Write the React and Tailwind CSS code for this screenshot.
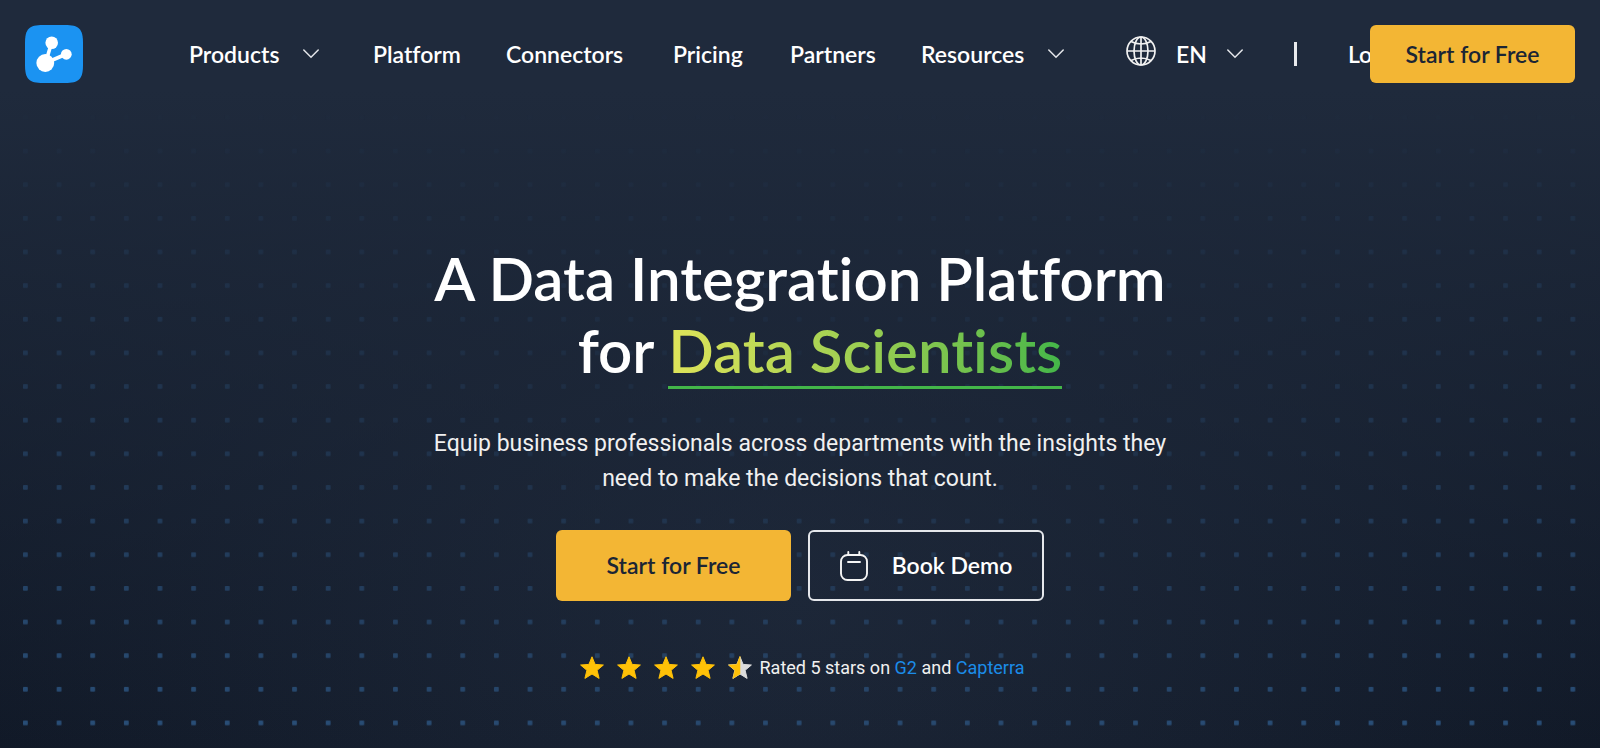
/**
 * Landing page hero — top navigation, headline, call-to-action buttons and rating.
 */

const NAV_ITEMS = [
    { label: 'Products', hasMenu: true, width: 'w-[184px]' },
    { label: 'Platform', width: 'w-[133px]' },
    { label: 'Connectors', width: 'w-[167px]' },
    { label: 'Pricing', width: 'w-[117px]' },
    { label: 'Partners', width: 'w-[131px]' },
    { label: 'Resources', hasMenu: true, width: 'w-[205px]' },
];

const STAR_PATH = 'M12 0.8l3.1 7.6 8.3.6-6.3 5.3 2 8.1L12 18l-7.1 4.4 2-8.1L.6 9l8.3-.6z';

function Logo() {
    return (
        <svg viewBox="0 0 58 58" className="size-[58px]" aria-hidden="true">
            <path
                d="M18 0H40C54 0 58 4 58 18V40C58 54 54 58 40 58H18C4 58 0 54 0 40V18C0 4 4 0 18 0z"
                fill="#1b93f2"
            />
            <path d="M20.500 38L26.500 18M20.500 38L41.500 29" stroke="#fff" strokeWidth="3.600" />
            <circle cx="20.300" cy="38" r="8.900" fill="#fff" />
            <circle cx="26.700" cy="17.800" r="6.300" fill="#fff" />
            <circle cx="41.300" cy="29.300" r="5.400" fill="#fff" />
        </svg>
    );
}

function Chevron() {
    return (
        <svg viewBox="0 0 16 10" className="h-[10px] w-4 shrink-0" fill="none" aria-hidden="true">
            <path d="M.8 1L8 8.300 15.200 1" stroke="#e5e7eb" strokeWidth="1.500" strokeLinecap="round" />
        </svg>
    );
}

function Globe() {
    return (
        <svg viewBox="0 0 30 36" className="h-9 w-[30px] shrink-0" fill="none" stroke="#f1f1f1" strokeWidth="1.700" aria-hidden="true">
            <circle cx="15" cy="15" r="14" />
            <ellipse cx="15" cy="15" rx="7" ry="14" />
            <path d="M15 1v28M1 15h28M5 5.500Q15 10.500 25 5.500M5 24.500Q15 19.500 25 24.500" />
        </svg>
    );
}

function CalendarIcon() {
    return (
        <svg viewBox="0 0 28 30" className="h-[30px] w-7 shrink-0" fill="none" stroke="#f5f5f5" strokeWidth="1.900" strokeLinecap="round" aria-hidden="true">
            <rect x="1" y="4" width="26" height="25" rx="6.500" />
            <path d="M8.300 1v3M19.300 1v3M8 11h12" />
        </svg>
    );
}

function Star({ half }) {
    return (
        <svg viewBox="0 0 24 24" className="size-6" aria-hidden="true">
            <path d={STAR_PATH} fill={half ? '#dcdcdc' : '#ffc107'} stroke={half ? '#dcdcdc' : '#ffc107'} strokeLinejoin="round" />
            {half && <path d="M12 .3V18l-7.100 4.400 2-8.100L.6 9l8.300-.6z" fill="#ffc107" stroke="#ffc107" strokeWidth="0.600" strokeLinejoin="round" />}
        </svg>
    );
}

// Dots get stronger towards the bottom and the sides
function DotGrid() {
    return (
        <svg className="absolute inset-0 -z-10 h-full w-full" aria-hidden="true">
            <defs>
                <pattern id="dots" x="23" y="14.100" width="33.640" height="33.640" patternUnits="userSpaceOnUse">
                    <rect width="4.800" height="4.800" rx="0.800" fill="#33659a" />
                </pattern>
                <linearGradient id="fadeDown" x1="0" y1="0" x2="0" y2="1">
                    <stop offset="0.140" stopColor="#fff" stopOpacity="0" />
                    <stop offset="0.400" stopColor="#fff" stopOpacity="0.270" />
                    <stop offset="0.800" stopColor="#fff" stopOpacity="0.560" />
                    <stop offset="1" stopColor="#fff" stopOpacity="0.700" />
                </linearGradient>
                <radialGradient id="fadeCenter" cx="0.500" cy="0.500" r="0.580">
                    <stop offset="0" stopColor="#000" stopOpacity="0.820" />
                    <stop offset="1" stopColor="#000" stopOpacity="0" />
                </radialGradient>
                <mask id="dotMask">
                    <rect width="100%" height="100%" fill="url(#fadeDown)" />
                    <rect width="100%" height="100%" fill="url(#fadeCenter)" />
                </mask>
            </defs>
            <rect width="100%" height="100%" fill="url(#dots)" mask="url(#dotMask)" />
        </svg>
    );
}

function Header() {
    return (
        <header className="flex items-center p-[25px]">
            <a href="#" aria-label="Home" className="shrink-0">
                <Logo />
            </a>
            <nav className="ml-[106px] flex min-w-0 flex-1 items-center whitespace-nowrap text-[23px] font-semibold">
                {NAV_ITEMS.map(({ label, hasMenu, width }) => (
                    <div key={label} className={`shrink-0 ${width}`}>
                        {hasMenu ? (
                            <button type="button" className="flex items-center gap-6">
                                {label}
                                <Chevron />
                            </button>
                        ) : (
                            <a href="#">{label}</a>
                        )}
                    </div>
                ))}
                <button type="button" className="flex shrink-0 items-center gap-5">
                    <Globe />
                    EN
                    <Chevron />
                </button>
                <span className="ml-[51px] h-6 w-[3px] shrink-0 bg-[#e8eaed]" />
                <a href="#" className="ml-[51px] shrink-0">Log In</a>
            </nav>
            <button type="button" className="z-10 h-[58px] w-[205px] shrink-0 rounded-md bg-[#f3b634] text-[23px] font-semibold text-[#1b2534]">
                Start for Free
            </button>
        </header>
    );
}

export default function App() {
    return (
        <div className="relative isolate min-h-screen bg-[linear-gradient(#1f2a3c_12%,transparent),radial-gradient(ellipse_60%_100%_at_50%_80%,#1c2637,#0f1725)] font-['Lato',sans-serif] text-white [font-variant-ligatures:none]">
            <DotGrid />
            <Header />

            <main className="flex flex-col items-center pt-[134px]">
                <h1 className="text-[60px] leading-[72px] font-semibold">
                    <span className="block text-center">A Data Integration Platform</span>
                    <span className="block pl-10 text-center">
                        for{' '}
                        <span className="inline-block border-b-[3px] border-[#43b649]">
                            <span className="bg-linear-to-r from-[#dfe45a] to-[#43b649] bg-clip-text text-transparent">
                                Data Scientists
                            </span>
                        </span>
                    </span>
                </h1>

                <p className="mt-[37px] w-[760px] text-center font-['Roboto',sans-serif] text-[23px] leading-[35px] text-[#f0f0f0]">
                    Equip business professionals across departments with the insights they need to make the decisions that count.
                </p>

                <div className="mt-[34px] flex gap-[17px] text-[23px] font-semibold">
                    <button type="button" className="h-[71px] w-[235px] rounded-md bg-[#f3b634] text-[#1b2534]">
                        Start for Free
                    </button>
                    <button type="button" className="flex h-[71px] w-[236px] items-center justify-center gap-6 rounded-md border-2 border-[#e5e7eb]">
                        <CalendarIcon />
                        Book Demo
                    </button>
                </div>

                <div className="mt-[53px] flex items-center gap-2 pl-1 font-['Roboto',sans-serif] text-lg">
                    <div className="flex gap-[13px]" role="img" aria-label="4.5 out of 5 stars">
                        <Star />
                        <Star />
                        <Star />
                        <Star />
                        <Star half />
                    </div>
                    <p className="text-[#f0f0f0]">
                        Rated 5 stars on <a href="#" className="text-[#1b8ce8]">G2</a> and{' '}
                        <a href="#" className="text-[#1b8ce8]">Capterra</a>
                    </p>
                </div>
            </main>
        </div>
    );
}
